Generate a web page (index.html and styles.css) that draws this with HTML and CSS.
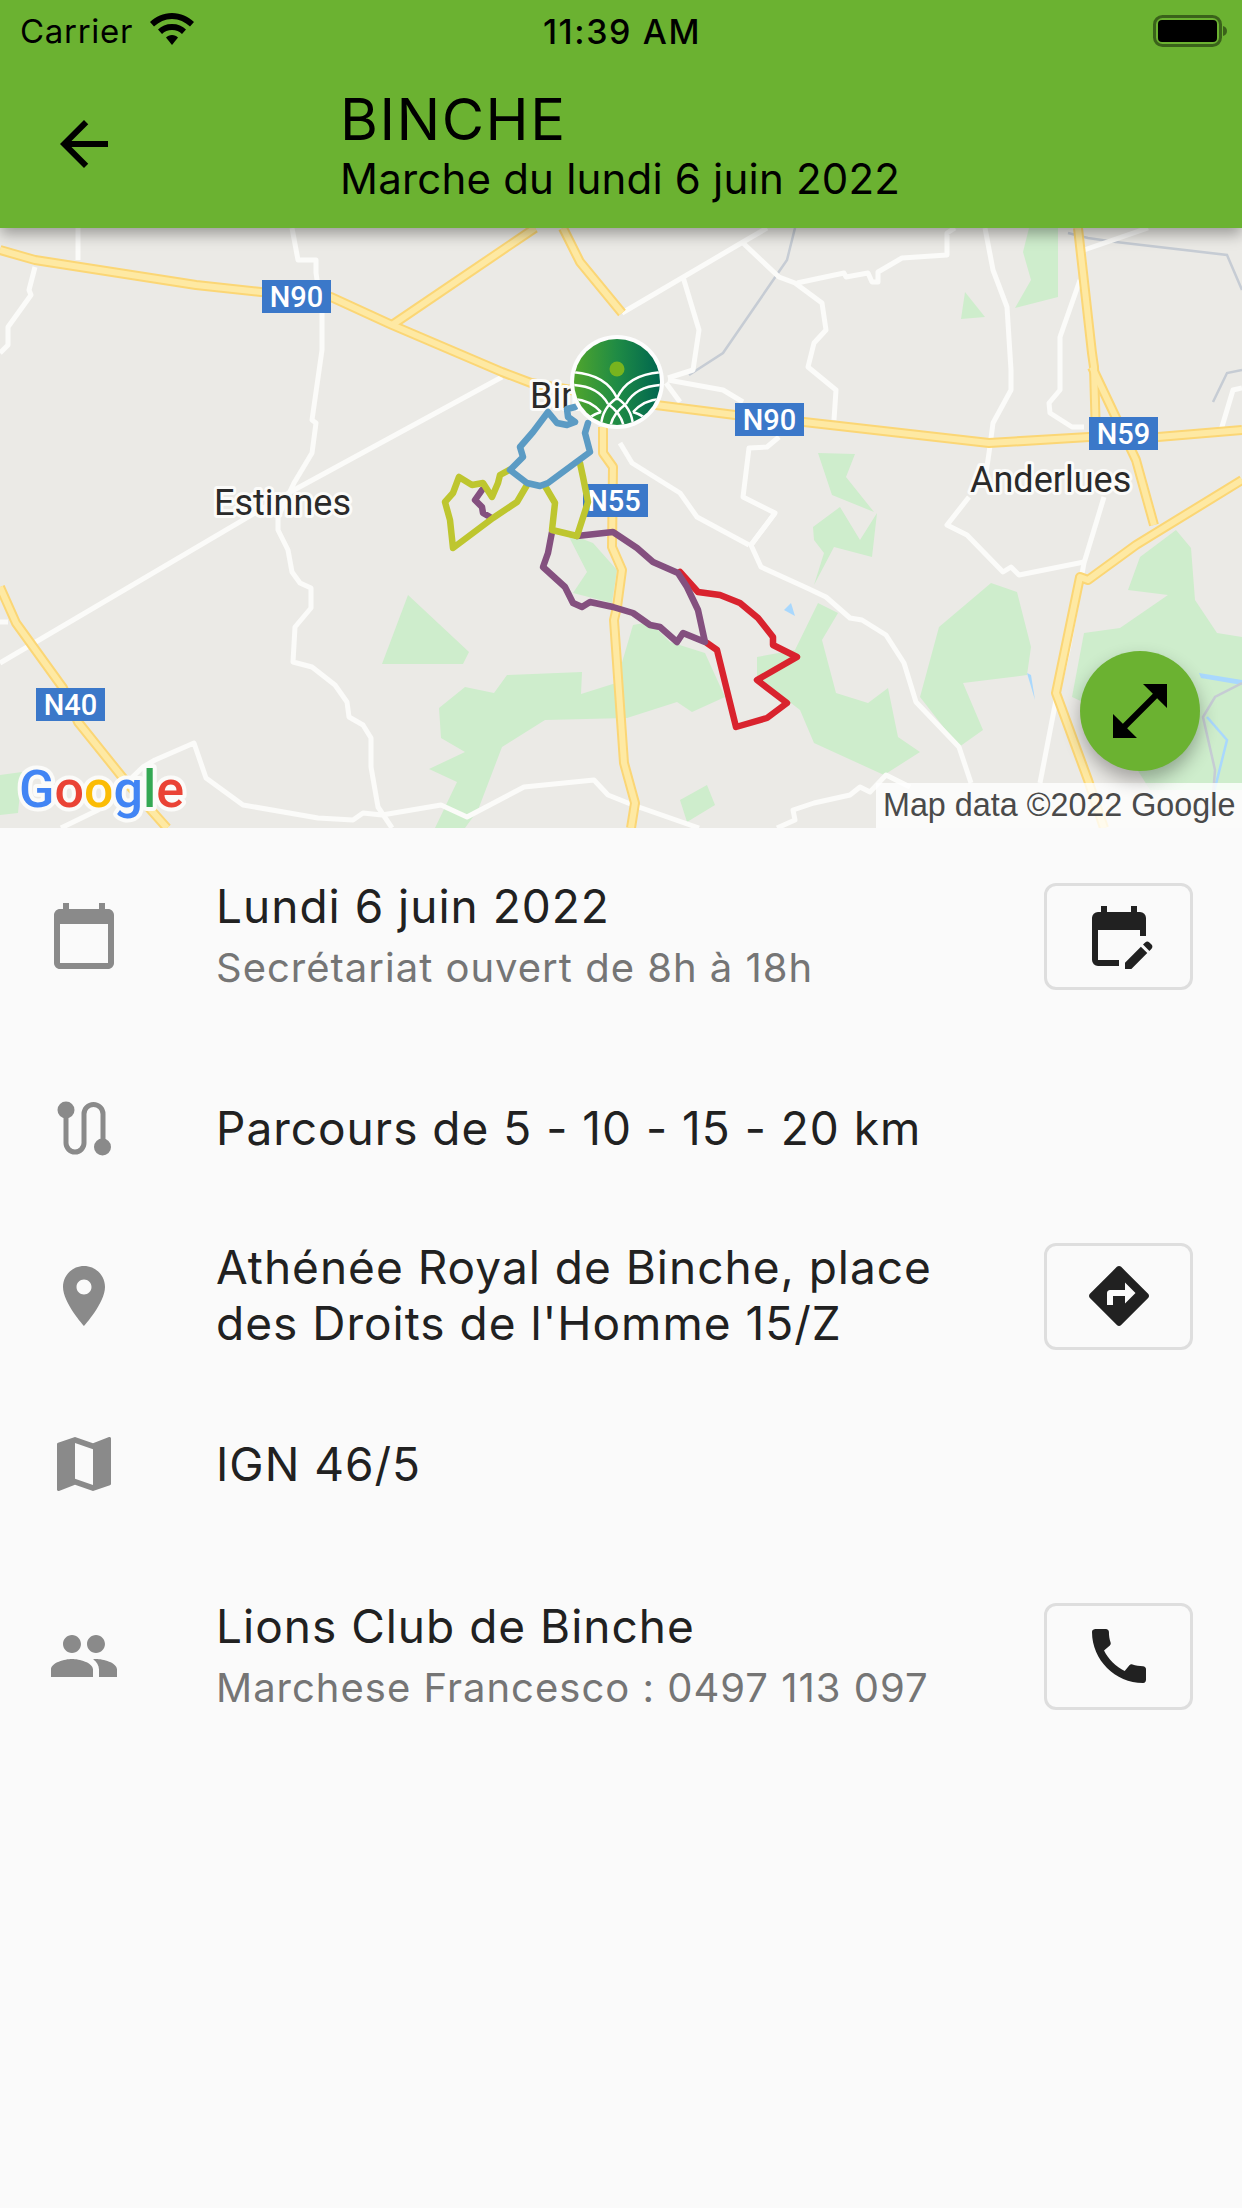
FILE: index.html
```html
<!DOCTYPE html>
<html lang="fr">
<head>
	<meta charset="UTF-8">
	<title>Binche</title>
	<link rel="stylesheet" href="styles.css">
</head>
<body>
<div class="screen">
	<header class="header">
		<div class="status">
			<div class="status-left">
				<span>Carrier</span>
				<svg class="wifi" viewBox="0 0 44 32"><path d="M22 0C13 0 6 3.5 0 9l4 4.500C9 9 15 6 22 6s13 3 18 7.500L44 9C38 3.500 31 0 22 0z"/><path d="M22 11c-6 0-10.500 2-14 5.500l4 4.500c2.500-2.500 6-4 10-4s7.500 1.500 10 4l4-4.500C32.500 13 28 11 22 11z"/><path d="M22 22c-2.500 0-4.500 1-6 2.500L22 32l6-7.500C26.500 23 24.500 22 22 22z"/></svg>
			</div>
			<span class="clock">11:39 AM</span>
			<div class="status-right">
				<svg class="battery" viewBox="0 0 74 32"><rect class="battery-shell" x="1.500" y="1.500" width="66" height="29" rx="8"/><rect x="5" y="5" width="59" height="22" rx="4"/><path class="battery-nub" d="M70 11c2.500 .5 4 2.500 4 5s-1.500 4.500-4 5z"/></svg>
			</div>
		</div>
		<div class="appbar">
			<svg class="icon" viewBox="0 0 24 24"><path d="M20 11H7.830l5.590-5.590L12 4l-8 8 8 8 1.410-1.410L7.830 13H20v-2z"/></svg>
			<div class="titles">
				<div class="title">BINCHE</div>
				<div class="subtitle">Marche du lundi 6 juin 2022</div>
			</div>
		</div>
	</header>

	<div class="map">
		<svg class="map-svg" viewBox="0 228 1242 600">
			<defs>
				<linearGradient id="logo-grad">
					<stop offset="0" stop-color="#4fa52c"/>
					<stop offset=".5" stop-color="#1f8b45"/>
					<stop offset="1" stop-color="#00664f"/>
				</linearGradient>
				<clipPath id="logo-clip"><circle cx="617" cy="382" r="43"/></clipPath>
				<g id="yellow-roads">
					<path d="M0 250L35 260L196 285L261 292L331 297L392 325L502 372L531 383L656 405L735 415L804 422L989 443L1089 437L1158 437L1242 430"/>
					<path d="M392 325L535 228"/>
					<path d="M563 228L580 262L622 313"/>
					<path d="M603 427L603 453L613 467L612 547L622 570L617 607L614 620L624 763L635 803L631 828"/>
					<path d="M0 587L16 623L63 688L78 722L127 783L167 828"/>
					<path d="M1078 228L1092 353L1094 367L1096 437"/>
					<path d="M1092 367L1136 460L1154 525"/>
					<path d="M1242 480L1136 545L1088 580L1080 577L1056 693L1088 780L1104 828"/>
				</g>
			</defs>

			<rect class="land" x="0" y="228" width="1242" height="600"/>

			<g class="park">
				<polygon points="1029,228 1058,228 1058,297 1015,308 1031,280 1023,252"/>
				<polygon points="965,292 985,317 961,319"/>
				<polygon points="818,453 855,454 846,477 874,512 832,495"/>
				<polygon points="813,527 840,507 860,540 877,513 872,557 834,547 814,585 824,553 814,540"/>
				<polygon points="382,664 408,595 469,652 463,664"/>
				<polygon points="439,708 465,687 494,693 507,675 582,672 581,694 616,683 633,625 650,622 670,642 705,653 725,697 692,712 677,702 627,718 545,720 502,747 478,810 465,828 435,828 457,782 429,769 465,752 441,738"/>
				<polygon points="567,533 593,543 617,570 612,603 573,593 587,572"/>
				<polygon points="818,603 838,613 822,640 836,693 868,703 888,688 898,737 920,752 884,775 814,743 800,710 757,677 757,657 795,650"/>
				<polygon points="680,800 707,785 715,805 687,822"/>
				<polygon points="939,627 991,583 1017,592 1031,647 1027,675 963,683 983,730 959,747 920,697"/>
				<polygon points="1140,557 1176,530 1191,548 1195,600 1217,633 1242,637 1242,790 1150,790 1100,710 1072,697 1084,633 1120,628 1168,595 1128,590"/>
				<polygon points="0,775 22,772 18,813 0,815"/>
			</g>

			<g class="water">
				<polygon points="791,603 784,610 795,616"/>
				<polygon points="1027,673 1031,675 1035,700"/>
				<polygon points="1199,673 1242,680 1242,685 1201,678"/>
			</g>
			<g class="stream">
				<path d="M1207 717L1227 740L1207 820"/>
			</g>
			<g class="rail">
				<path d="M795 228L787 260L723 353L689 375"/>
				<path d="M1068 233L1088 238L1116 242L1227 255L1242 290"/>
				<path d="M1213 402L1227 373L1242 370"/>
				<path d="M1242 683L1215 697L1203 717L1215 770L1211 820"/>
			</g>

			<g class="white-roads">
				<path d="M78 228V260"/>
				<path d="M35 267L29 290L31 295L8 327L8 345L0 353"/>
				<path d="M292 228L298 260L316 260L316 273L322 313L322 350L312 420L316 423L312 453L294 483L278 517L278 530L288 550L292 572L300 583L311 588L311 608L295 627L293 662L312 667L335 685L347 702L349 717L363 725L371 738L371 767L378 807L392 828"/>
				<path d="M502 377L294 490L0 663"/>
				<path d="M622 313L743 242L767 228"/>
				<path d="M683 277L699 330L693 370L668 378"/>
				<path d="M743 243L779 277L795 283L822 303L826 330L814 343L808 367L836 390L834 420"/>
				<path d="M797 283L844 273L846 277L868 273L872 282L878 282L878 272L902 258L947 255L947 233L955 228"/>
				<path d="M985 228L993 270L1007 307L1011 370L1011 390L993 423L989 453L985 480"/>
				<path d="M1080 280L1060 337L1060 390L1049 403L1050 413L1072 427L1084 427"/>
				<path d="M1084 250L1148 228"/>
				<path d="M779 437L767 447L749 448L743 497L775 513L751 545L761 567L807 588L826 597L850 618L862 620L886 635L904 663L916 702L959 747L971 783"/>
				<path d="M620 443L632 463L680 493L697 517L749 545"/>
				<path d="M775 513L751 545"/>
				<path d="M668 380L723 390L743 402"/>
				<path d="M666 383L680 402"/>
				<path d="M1104 497L1084 563L1068 650L1056 700L1040 783"/>
				<path d="M969 497L947 525L967 535L1003 572L1011 567L1019 575L1084 562"/>
				<path d="M1221 430L1233 390L1242 388"/>
				<path d="M61 828L98 810L143 767L155 760L194 743L206 778L243 805L318 818L353 820L363 813L382 815L441 805L467 817L524 787L594 780L608 795L633 805L699 828"/>
				<path d="M777 828L795 820L793 810L814 803L850 795L860 787L870 792L886 775L910 787"/>
				<path d="M0 622H8"/>
			</g>

			<use href="#yellow-roads" class="road-edge"/>
			<use href="#yellow-roads" class="road-core"/>

			<text class="place" x="214" y="515">Estinnes</text>
			<text class="place" x="970" y="492">Anderlues</text>
			<text class="place" x="530" y="408">Bin</text>

			<g class="badge">
				<rect x="262" y="280" width="69" height="33"/><text x="296.500" y="307">N90</text>
				<rect x="735" y="403" width="69" height="33"/><text x="769.500" y="430">N90</text>
				<rect x="1089" y="417" width="69" height="33"/><text x="1123.500" y="444">N59</text>
				<rect x="583" y="484" width="65" height="33"/><text x="614" y="511">N55</text>
				<rect x="36" y="688" width="69" height="33"/><text x="70.500" y="715">N40</text>
			</g>

			<g class="route">
				<path class="route-red" d="M680 572L698 592L720 595L740 603L758 618L773 637L773 645L797 657L757 680L787 703L767 718L736 727L717 650L707 643"/>
				<path class="route-purple" d="M552 532L548 553L543 567L565 587L573 603L582 607L590 602L613 607L633 613L650 625L660 627L677 642L683 633L705 642L698 610L687 587L678 573L653 562L637 548L613 532L577 536"/>
				<path class="route-purple" d="M482 490L475 500L482 507L483 513L490 517"/>
				<path class="route-yellow" d="M509 470L500 475L498 483L492 497L483 483L472 485L459 477L453 493L445 502L450 520L453 548L493 518L517 502L527 485"/>
				<path class="route-yellow" d="M545 486L555 503L552 530L577 536L588 502L583 477L580 463"/>
				<path class="route-blue" d="M575 407L567 409L568 417L575 422L567 425L557 423L548 412L533 432L520 447L523 457L510 470L527 483L540 486L548 483L590 452L585 433L588 423"/>
			</g>

			<rect class="attribution-bg" x="876" y="783" width="366" height="45"/>
			<text class="attribution" x="883" y="816">Map data ©2022 Google</text>
			<text class="google" x="19" y="807"><tspan fill="#4285f4">G</tspan><tspan fill="#ea4335">o</tspan><tspan fill="#fbbc05">o</tspan><tspan fill="#4285f4">g</tspan><tspan fill="#34a853">l</tspan><tspan fill="#ea4335">e</tspan></text>

			<g class="marker">
				<circle class="marker-ring" cx="617" cy="382" r="47"/>
				<circle cx="617" cy="382" r="43" fill="url(#logo-grad)"/>
				<circle class="marker-dot" cx="617" cy="369" r="7.500"/>
				<g class="marker-lines" clip-path="url(#logo-clip)">
					<path d="M572 372Q606 374 617 398Q628 374 662 372"/>
					<path d="M572 385Q598 386 608 404"/>
					<path d="M662 385Q636 386 626 404"/>
					<path d="M574 399Q590 400 601 412"/>
					<path d="M660 399Q644 400 633 412"/>
					<path d="M617 398Q602 408 601 426M617 398Q632 408 633 426"/>
					<path d="M608 404Q622 414 624 428M626 404Q612 414 610 428"/>
					<path d="M601 412Q588 416 584 424M633 412Q646 416 650 424"/>
				</g>
			</g>
		</svg>
		<div class="fab">
			<svg class="icon" viewBox="0 0 24 24"><path d="M21 11V3h-8l3.290 3.290-10 10L3 13v8h8l-3.290-3.290 10-10z"/></svg>
		</div>
	</div>

	<div class="details">
		<div class="row row-sub">
			<svg class="icon icon-grey" viewBox="0 0 24 24"><path d="M20 3h-1V1h-2v2H7V1H5v2H4c-1.100 0-2 .9-2 2v16c0 1.100.9 2 2 2h16c1.100 0 2-.9 2-2V5c0-1.100-.9-2-2-2zm0 18H4V8h16v13z"/></svg>
			<div class="text">
				<div class="main">Lundi 6 juin 2022</div>
				<div class="sub">Secrétariat ouvert de 8h à 18h</div>
			</div>
			<div class="btn">
				<svg class="icon" viewBox="0 0 24 24"><path d="M12 22H5a2 2 0 0 1-1.990-2L3 6a2 2 0 0 1 2-2h1V2h2v2h8V2h2v2h1a2 2 0 0 1 2 2v6h-2v-2H5v10h7v2z"/><path d="M22.130 16.990l.71-.71c.39-.39.39-1.020 0-1.410l-.71-.71a.996.996 0 0 0-1.410 0l-.71.71 2.120 2.120zm-.71.71-5.300 5.300H14v-2.120l5.300-5.300 2.120 2.120z"/></svg>
			</div>
		</div>

		<div class="row row-plain">
			<svg class="icon icon-grey" viewBox="0 0 72 72"><circle cx="18" cy="18" r="8.500"/><circle cx="54.500" cy="55" r="8.500"/><path class="route-line" d="M18 18V51a9 9 0 0 0 18 0V22a9.500 9.500 0 0 1 19 0V55"/></svg>
			<div class="text">
				<div class="main">Parcours de 5 - 10 - 15 - 20 km</div>
			</div>
		</div>

		<div class="row row-two">
			<svg class="icon icon-grey" viewBox="0 0 24 24"><path d="M12 2C8.130 2 5 5.130 5 9c0 5.250 7 13 7 13s7-7.750 7-13c0-3.870-3.130-7-7-7zm0 9.500c-1.380 0-2.500-1.120-2.500-2.500s1.120-2.500 2.500-2.500 2.500 1.120 2.500 2.500-1.120 2.500-2.500 2.500z"/></svg>
			<div class="text text-two">
				<div class="main">Athénée Royal de Binche, place des Droits de l'Homme 15/Z</div>
			</div>
			<div class="btn">
				<svg class="icon" viewBox="0 0 24 24"><path d="M21.710 11.290l-9-9c-.39-.39-1.020-.39-1.410 0l-9 9c-.39.39-.39 1.020 0 1.410l9 9c.39.39 1.020.39 1.410 0l9-9c.39-.38.39-1.010 0-1.410zM14 14.500V12h-4v3H8v-4c0-.55.45-1 1-1h5V7.500l3.500 3.500-3.500 3.500z"/></svg>
			</div>
		</div>

		<div class="row row-plain">
			<svg class="icon icon-grey" viewBox="0 0 24 24"><path d="M20.500 3l-.16.03L15 5.100 9 3 3.360 4.900c-.21.07-.36.25-.36.48V20.500c0 .28.22.5.5.5l.16-.03L9 18.900l6 2.100 5.640-1.900c.21-.07.36-.25.36-.48V3.500c0-.28-.22-.5-.5-.5zM15 19l-6-2.110V5l6 2.110V19z"/></svg>
			<div class="text">
				<div class="main">IGN 46/5</div>
			</div>
		</div>

		<div class="row row-sub">
			<svg class="icon icon-grey" viewBox="0 0 24 24"><path d="M16 11c1.660 0 2.990-1.340 2.990-3S17.660 5 16 5c-1.660 0-3 1.340-3 3s1.340 3 3 3zm-8 0c1.660 0 2.990-1.340 2.990-3S9.660 5 8 5C6.340 5 5 6.340 5 8s1.340 3 3 3zm0 2c-2.330 0-7 1.170-7 3.500V19h14v-2.500c0-2.330-4.670-3.500-7-3.500zm8 0c-.29 0-.62.02-.97.05 1.160.84 1.970 1.970 1.970 3.450V19h6v-2.500c0-2.330-4.670-3.500-7-3.500z"/></svg>
			<div class="text">
				<div class="main">Lions Club de Binche</div>
				<div class="sub">Marchese Francesco : 0497 113 097</div>
			</div>
			<div class="btn">
				<svg class="icon" viewBox="0 0 24 24"><path d="M20.010 15.380c-1.230 0-2.420-.2-3.530-.56-.35-.12-.74-.03-1.010.24l-1.570 1.970c-2.830-1.350-5.480-3.900-6.890-6.830l1.950-1.660c.27-.28.35-.67.24-1.020-.37-1.110-.56-2.300-.56-3.530 0-.54-.45-.99-.99-.99H4.190C3.650 3 3 3.240 3 3.990 3 13.280 10.730 21 20.010 21c.71 0 .99-.63.99-1.180v-3.450c0-.54-.45-.99-.99-.99z"/></svg>
			</div>
		</div>
	</div>
</div>
</body>
</html>
```

FILE: styles.css
```css
* {
	padding: 0;
	margin: 0;
	box-sizing: border-box;
}
html, body {
	width: 1242px;
	height: 2208px;
	overflow: hidden;
}
body {
	background: #fafafa;
	font-family: "Inter", "Liberation Sans", sans-serif;
	color: #212121;
}
.icon {
	display: block;
	width: 72px;
	height: 72px;
	flex: none;
}
.icon-grey {
	fill: #8a8a8a;
}

/* header */
.header {
	position: relative;
	z-index: 2;
	height: 228px;
	background: #6bb231;
	color: #000;
	box-shadow: 0 6px 14px rgba(0, 0, 0, .35);
}
.status {
	height: 62px;
	display: flex;
	align-items: center;
	padding: 0 15px 0 20px;
	font-size: 33px;
	letter-spacing: .7px;
}
.status-left, .status-right {
	flex: 1;
	display: flex;
	align-items: center;
}
.status-left {
	gap: 17px;
}
.status-right {
	justify-content: flex-end;
}
.clock {
	font-weight: 500;
	font-size: 34px;
	letter-spacing: 1.600px;
	margin-right: 3px;
}
.wifi {
	width: 44px;
	height: 32px;
	margin-top: -4px;
}
.battery {
	width: 74px;
	height: 32px;
}
.battery-shell {
	fill: none;
	stroke: rgba(0, 0, 0, .45);
	stroke-width: 3;
}
.battery-nub {
	fill: rgba(0, 0, 0, .45);
}
.appbar {
	display: flex;
	align-items: center;
	padding-left: 48px;
	gap: 220px;
	height: 164px;
}
.title {
	font-size: 58px;
	line-height: 70px;
	letter-spacing: 1.500px;
}
.subtitle {
	font-size: 42px;
	line-height: 50px;
	letter-spacing: .2px;
}

/* map */
.map {
	position: relative;
	height: 600px;
}
.map-svg {
	display: block;
	width: 1242px;
	height: 600px;
}
.land {
	fill: #ebeae6;
}
.park {
	fill: #ceedcc;
}
.water {
	fill: #a9d8fd;
}
.stream, .rail {
	fill: none;
	stroke-width: 2.500;
}
.stream {
	stroke: #a9d8fd;
}
.rail {
	stroke: #c6ccd4;
}
.white-roads {
	fill: none;
	stroke: #fbfbf9;
	stroke-width: 5;
	stroke-linejoin: round;
}
.road-edge, .road-core {
	fill: none;
	stroke-linejoin: round;
}
.road-edge {
	stroke: #fbd675;
	stroke-width: 10;
}
.road-core {
	stroke: #fee9a3;
	stroke-width: 6;
}
.route {
	fill: none;
	stroke-width: 6.500;
	stroke-linejoin: round;
	stroke-linecap: round;
}
.route-red {
	stroke: #d9232e;
}
.route-purple {
	stroke: #84507f;
}
.route-yellow {
	stroke: #bec62f;
}
.route-blue {
	stroke: #5b9bc4;
}
.place {
	font-family: "Roboto", sans-serif;
	font-size: 36px;
	fill: #2a2a2a;
	stroke: #fbfbf9;
	stroke-width: 6px;
	stroke-linejoin: round;
	paint-order: stroke;
}
.badge rect {
	fill: #3b78c9;
}
.badge text {
	font-family: "Roboto", sans-serif;
	font-size: 29px;
	font-weight: 500;
	fill: #fff;
	text-anchor: middle;
}
.attribution-bg {
	fill: rgba(255, 255, 255, .8);
}
.attribution {
	font-family: "Liberation Sans", sans-serif;
	font-size: 32.300px;
	fill: #4a4a4a;
}
.google {
	font-family: "Roboto", sans-serif;
	font-size: 52px;
	font-weight: 500;
	stroke: #fbfbf9;
	stroke-width: 8px;
	stroke-linejoin: round;
	paint-order: stroke;
}
.marker-ring {
	fill: #fdfdfd;
}
.marker-dot {
	fill: #78b41e;
}
.marker-lines {
	fill: none;
	stroke: #fff;
	stroke-width: 2.500;
}
.fab {
	position: absolute;
	right: 42px;
	bottom: 57px;
	width: 120px;
	height: 120px;
	border-radius: 50%;
	background: #6bb231;
	display: flex;
	align-items: center;
	justify-content: center;
	box-shadow: 0 9px 18px rgba(0, 0, 0, .3);
}

/* details */
.details {
	display: flex;
	flex-direction: column;
	gap: 48px;
	padding: 28px 48px 0;
}
.row {
	display: flex;
	align-items: center;
}
.row-sub {
	height: 160px;
}
.row-plain {
	height: 128px;
}
.row-two {
	height: 112px;
}
.text {
	flex: 1;
	margin-left: 96px;
	margin-right: 40px;
}
.text-two {
	margin-bottom: 3px;
}
.main {
	font-size: 46px;
	line-height: 56px;
	letter-spacing: 1px;
}
.sub {
	font-size: 40px;
	line-height: 52px;
	letter-spacing: 1px;
	margin-top: 8px;
	color: #757575;
}
.btn {
	width: 149px;
	height: 107px;
	margin-right: 1px;
	border: 3px solid #dedede;
	border-radius: 12px;
	display: flex;
	align-items: center;
	justify-content: center;
	fill: #212121;
}
.route-line {
	fill: none;
	stroke: #8a8a8a;
	stroke-width: 5;
}
```
